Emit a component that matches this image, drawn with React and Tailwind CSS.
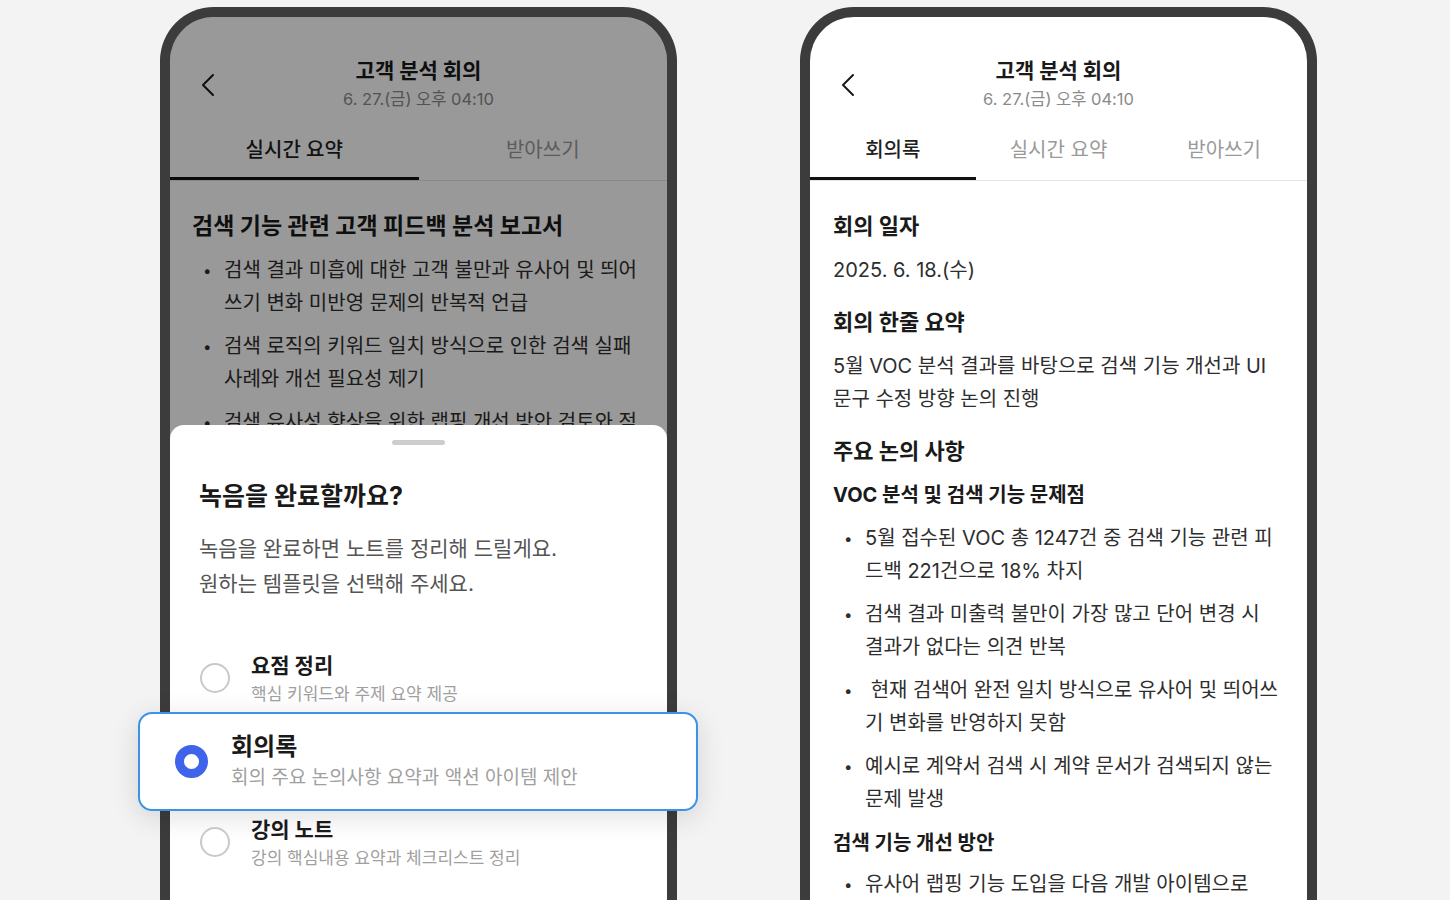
import React from "react";

const font = "font-['Inter','Noto_Sans_CJK_KR',sans-serif]";

function BackIcon() {
  return (
    <svg width="14" height="24" viewBox="0 0 14 24" fill="none">
      <path d="M12 2 L2 12 L12 22" stroke="#1a1a1a" strokeWidth="2" strokeLinecap="round" strokeLinejoin="round" />
    </svg>
  );
}

function Header() {
  return (
    <div className="grid grid-cols-[1fr_auto_1fr] items-center pt-[40px]">
      <div className="pl-[31px] pt-[2px]">
        <BackIcon />
      </div>
      <div className="flex flex-col items-center">
        <div className="text-[21px] leading-[28px] font-bold text-[#1a1a1a]">고객 분석 회의</div>
        <div className="mt-[3px] text-[16.5px] leading-[22px] text-[#8a8a8a]">6. 27.(금) 오후 04:10</div>
      </div>
      <div />
    </div>
  );
}

function Tabs({ items, active }) {
  const cols = items.length === 3 ? "grid-cols-3" : "grid-cols-2";
  return (
    <div className={`mt-[10px] grid ${cols} border-b border-[#e4e4e4]`}>
      {items.map((label, i) => (
        <div
          key={label}
          className={`h-[60px] flex items-center justify-center text-[20px] ${
            i === active ? "text-[#1f1f1f] font-medium border-b-[3px] border-[#111] pt-[3px]" : "text-[#9a9a9a]"
          }`}
        >
          {label}
        </div>
      ))}
    </div>
  );
}

function Bullets({ items, className = "" }) {
  return (
    <ul className={`flex flex-col gap-[10px] ${className}`}>
      {items.map((text, i) => (
        <li key={i} className="flex text-[20px] leading-[33px] text-[#2e2e2e]">
          <span className="w-[32px] shrink-0 pl-[11px] text-[15px]">•</span>
          <span>{text}</span>
        </li>
      ))}
    </ul>
  );
}

function Radio({ checked }) {
  if (checked) {
    return <div className="w-[33px] h-[33px] shrink-0 rounded-full border-[9px] border-[#3f63ea] bg-white" />;
  }
  return <div className="w-[30px] h-[30px] shrink-0 rounded-full border-2 border-[#c9c9c9] bg-white" />;
}

function Option({ title, desc }) {
  return (
    <div className="flex items-center pl-[30px] gap-[21px]">
      <Radio />
      <div className="flex flex-col gap-[3px]">
        <div className="text-[21px] leading-[29px] font-bold text-[#1a1a1a]">{title}</div>
        <div className="text-[17px] leading-[22px] text-[#a0a0a0]">{desc}</div>
      </div>
    </div>
  );
}

function Phone({ children }) {
  return (
    <div className="relative w-[517px] h-[940px] shrink-0 mt-[7px] rounded-t-[54px] border-[10px] border-b-0 border-[#3c3c3c] bg-white">
      {children}
    </div>
  );
}

function RecordingPhone() {
  return (
    <Phone>
      <Header />
      <Tabs items={["실시간 요약", "받아쓰기"]} active={0} />
      <div className="pl-[22px] pr-[22px] pt-[30px]">
        <h2 className="text-[23px] leading-[30px] font-bold text-[#1a1a1a]">
          검색 기능 관련 고객 피드백 분석 보고서
        </h2>
        <Bullets
          className="mt-[13px]"
          items={[
            "검색 결과 미흡에 대한 고객 불만과 유사어 및 띄어쓰기 변화 미반영 문제의 반복적 언급",
            "검색 로직의 키워드 일치 방식으로 인한 검색 실패 사례와 개선 필요성 제기",
            "검색 유사성 향상을 위한 랩핑 개선 방안 검토와 적용 계획 수립",
          ]}
        />
      </div>

      {/* dim layer */}
      <div className="absolute inset-0 rounded-t-[44px] bg-black/40" />

      {/* bottom sheet */}
      <div className="absolute left-0 right-0 top-[408px] bottom-0 rounded-t-[14px] bg-white">
        <div className="flex justify-center pt-[15px]">
          <div className="w-[53px] h-[5px] rounded-full bg-[#cdcdcd]" />
        </div>
        <div className="pl-[29px] mt-[35px]">
          <div className="text-[25px] leading-[33px] font-bold text-[#1a1a1a]">녹음을 완료할까요?</div>
          <div className="mt-[18px] text-[21px] leading-[35px] text-[#555]">
            <div>녹음을 완료하면 노트를 정리해 드릴게요.</div>
            <div>원하는 템플릿을 선택해 주세요.</div>
          </div>
        </div>

        <div className="mt-[50px] flex flex-col">
          <Option title="요점 정리" desc="핵심 키워드와 주제 요약 제공" />
          <div className="mt-[7px] -ml-[32px] -mr-[31px] h-[99px] flex items-center pl-[35px] gap-[23px] rounded-[14px] border-2 border-[#3a93e6] bg-white shadow-[0_6px_28px_rgba(0,0,0,0.13)]">
            <Radio checked />
            <div className="flex flex-col gap-[3px]">
              <div className="text-[24px] leading-[30px] font-bold text-[#1a1a1a]">회의록</div>
              <div className="text-[19px] leading-[26px] text-[#a0a0a0]">회의 주요 논의사항 요약과 액션 아이템 제안</div>
            </div>
          </div>
          <div className="mt-[4px]">
            <Option title="강의 노트" desc="강의 핵심내용 요약과 체크리스트 정리" />
          </div>
        </div>
      </div>
    </Phone>
  );
}

function SectionTitle({ children, className = "" }) {
  return <h2 className={`text-[22px] leading-[30px] font-bold text-[#1a1a1a] ${className}`}>{children}</h2>;
}

function SubTitle({ children, className = "" }) {
  return <h3 className={`text-[20px] leading-[30px] font-bold text-[#1a1a1a] ${className}`}>{children}</h3>;
}

function MinutesPhone() {
  return (
    <Phone>
      <Header />
      <Tabs items={["회의록", "실시간 요약", "받아쓰기"]} active={0} />
      <div className="pl-[23px] pr-[25px] pt-[30px]">
        <SectionTitle>회의 일자</SectionTitle>
        <p className="mt-[13px] text-[20px] leading-[33px] text-[#2e2e2e]">2025. 6. 18.(수)</p>

        <SectionTitle className="mt-[20px]">회의 한줄 요약</SectionTitle>
        <p className="mt-[13px] text-[20px] leading-[33px] text-[#2e2e2e]">
          5월 VOC 분석 결과를 바탕으로 검색 기능 개선과 UI 문구 수정 방향 논의 진행
        </p>

        <SectionTitle className="mt-[20px]">주요 논의 사항</SectionTitle>
        <SubTitle className="mt-[14px]">VOC 분석 및 검색 기능 문제점</SubTitle>
        <Bullets
          className="mt-[12px]"
          items={[
            "5월 접수된 VOC 총 1247건 중 검색 기능 관련 피드백 221건으로 18% 차지",
            "검색 결과 미출력 불만이 가장 많고 단어 변경 시 결과가 없다는 의견 반복",
            "\u00a0현재 검색어 완전 일치 방식으로 유사어 및 띄어쓰기 변화를 반영하지 못함",
            "예시로 계약서 검색 시 계약 문서가 검색되지 않는 문제 발생",
          ]}
        />
        <SubTitle className="mt-[12px]">검색 기능 개선 방안</SubTitle>
        <Bullets
          className="mt-[10px]"
          items={[
            <>
              유사어 랩핑 기능 도입을 다음 개발 아이템으로
              <br />
              우선 검토
            </>,
          ]}
        />
      </div>
    </Phone>
  );
}

export default function App() {
  return (
    <div className={`h-[900px] w-full overflow-hidden bg-[#f3f3f3] ${font}`}>
      <div className="flex pl-[160px] gap-[123px]">
        <RecordingPhone />
        <MinutesPhone />
      </div>
    </div>
  );
}
